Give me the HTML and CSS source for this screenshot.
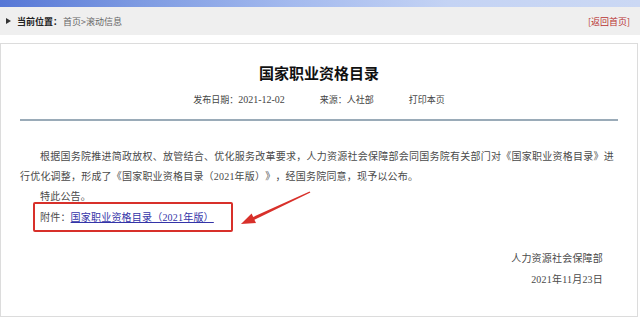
FILE: index.html
```html
<!DOCTYPE html>
<html lang="zh-CN">
  <head>
    <meta charset="utf-8" />
    <title>国家职业资格目录</title>
    <link rel="stylesheet" href="styles.css">
  </head>
  <body>
    <div class="top-band"></div>

    <div class="crumb">
      <div class="crumb-left">
        <span class="crumb-arrow"></span>
        <span class="crumb-label">当前位置：</span>
        <span class="crumb-path">首页&gt;滚动信息</span>
      </div>
      <a class="crumb-home" href="#">[返回首页]</a>
    </div>

    <div class="article">
      <h1 class="article-title">国家职业资格目录</h1>
      <div class="article-meta">
        <span>发布日期：<span class="num">2021-12-02</span></span>
        <span>来源：人社部</span>
        <span>打印本页</span>
      </div>
      <div class="article-rule"></div>

      <div class="article-body">
        <p class="para">根据国务院推进简政放权、放管结合、优化服务改革要求，人力资源社会保障部会同国务院有关部门对《国家职业资格目录》进行优化调整，形成了《国家职业资格目录（2021年版）》，经国务院同意，现予以公布。</p>
        <p class="para">特此公告。</p>
        <p class="para attach">
          <span class="attach-line">附件：<a class="attach-link" href="#">国家职业资格目录（2021年版）</a><span class="mark-box"></span></span>
        </p>

        <div class="sign">
          <div>人力资源社会保障部</div>
          <div>2021年11月23日</div>
        </div>
      </div>
    </div>

    <!-- annotation arrow drawn over the page -->
    <svg class="mark-arrow" width="640" height="317" viewBox="0 0 640 317">
      <polygon fill="#d8302a" points="241,224 256,223 254.4,219.7 310.4,192.6 309.6,191.4 253.2,216.9 251.6,213.4" />
    </svg>
  </body>
</html>
```

FILE: styles.css
```css
body {
  margin: 0;
  width: 640px;
  height: 317px;
  overflow: hidden;
  position: relative;
  background: #ffffff;
  font-family: "Liberation Serif", "Noto Sans CJK SC", serif;
  color: #333333;
  text-spacing-trim: space-all;
}

.top-band {
  height: 7px;
  background: linear-gradient(90deg, #5677d6 0%, #7e9be2 22%, #a3b9ee 45%, #c4d3f4 70%, #cbd8f4 100%);
}

.crumb {
  height: 28px;
  display: flex;
  align-items: center;
  justify-content: space-between;
  padding: 0 10px 0 6px;
  background-color: #efefef;
  font-family: "Noto Sans CJK SC", sans-serif;
  font-size: 9px;
}

.crumb-left {
  display: flex;
  align-items: center;
}

.crumb-arrow {
  width: 0;
  height: 0;
  border-left: 5px solid #333333;
  border-top: 3.5px solid transparent;
  border-bottom: 3.5px solid transparent;
  margin-right: 6px;
}

.crumb-label {
  font-weight: bold;
  color: #222222;
}

.crumb-path {
  color: #666666;
  margin-left: 1px;
}

.crumb-home {
  color: #b83232;
  text-decoration: none;
}

.article {
  box-sizing: border-box;
  margin: 8px 2px 0 0;
  height: 274px;
  border: 1px solid #dcdcdc;
  padding-top: 19px;
}

.article-title {
  margin: 0;
  text-align: center;
  font-family: "Noto Sans CJK SC", sans-serif;
  font-size: 15px;
  line-height: 20px;
  font-weight: bold;
  color: #111111;
}

.article-meta {
  margin-top: 10px;
  display: flex;
  justify-content: center;
  gap: 35px;
  font-family: "Noto Sans CJK SC", sans-serif;
  font-size: 9px;
  line-height: 14px;
  color: #444444;
}

.article-meta .num {
  font-family: "Liberation Serif", serif;
  font-size: 10px;
}

.article-rule {
  margin: 12px 19px 0;
  border-top: 2px solid #9aabb8;
}

.article-body {
  padding: 26px 23px 0 19px;
  font-size: 10px;
  letter-spacing: 0.2px;
  line-height: 20px;
  color: #4a4a4a;
}

.para {
  margin: 0;
  text-indent: 2em;
  text-align: justify;
}

.attach {
  margin-top: 1px;
}

.attach-line {
  position: relative;
  display: inline-block;
  text-indent: 0;
  line-height: 20px;
}

.attach-link {
  color: #3434a8;
  text-decoration: underline;
}

.mark-box {
  position: absolute;
  left: -7px;
  right: -19px;
  top: -6px;
  bottom: -4px;
  border: 2px solid #d8302a;
  border-radius: 2px;
}

.sign {
  margin: 20px 11px 0 0;
  text-align: right;
  line-height: 21px;
}

.mark-arrow {
  position: absolute;
  left: 0;
  top: 0;
  pointer-events: none;
}
```
